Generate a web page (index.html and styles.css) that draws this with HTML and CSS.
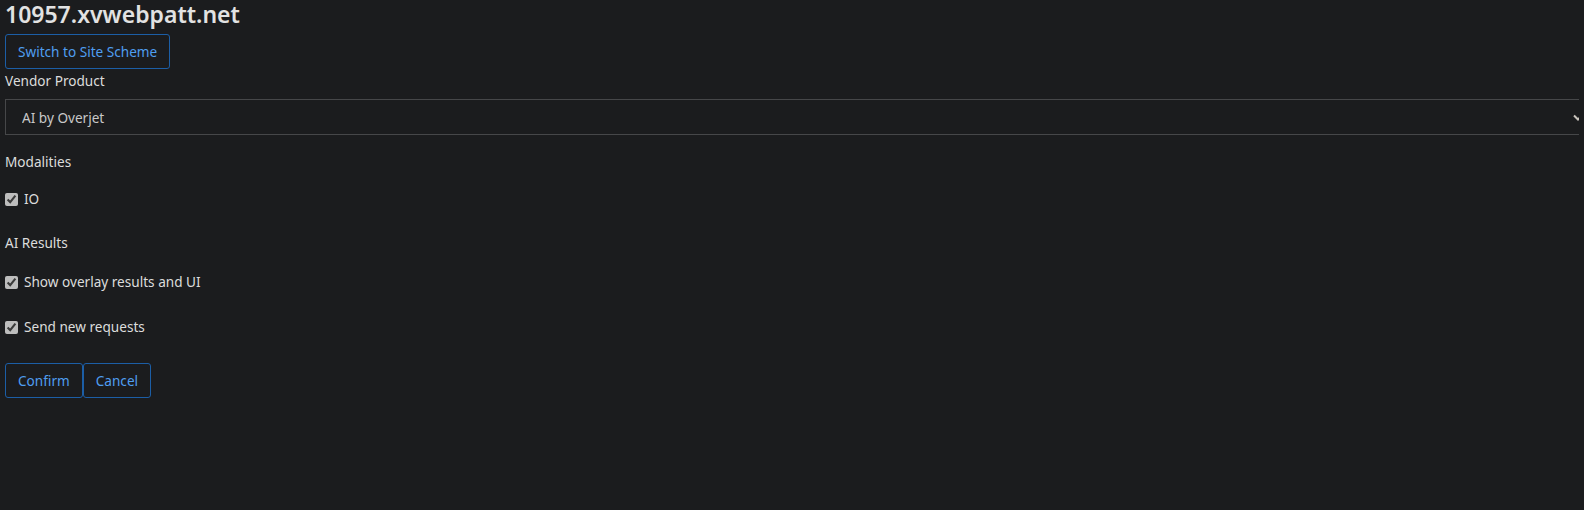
FILE: index.html
```html
<!DOCTYPE html>
<html>
<head>
<meta charset="utf-8">
<title>10957.xvwebpatt.net</title>
<link rel="stylesheet" href="styles.css">
</head>
<body>
<h1 class="site">10957.xvwebpatt.net</h1>
<button class="btn switch" type="button">Switch to Site Scheme</button>
<form class="settings">
<label class="field-label" for="vendor">Vendor Product</label>
<select id="vendor" class="vendor">
<option>AI by Overjet</option>
</select>
<fieldset class="group modalities">
<legend>Modalities</legend>
<label class="check"><input type="checkbox" checked> IO</label>
</fieldset>
<fieldset class="group results">
<legend>AI Results</legend>
<label class="check"><input type="checkbox" checked> Show overlay results and UI</label>
<label class="check"><input type="checkbox" checked> Send new requests</label>
</fieldset>
<div class="actions">
<button class="btn" type="button">Confirm</button><button class="btn" type="button">Cancel</button>
</div>
</form>
</body>
</html>
```

FILE: styles.css
```css
html{background-color:#1b1c1e;overflow:hidden;}
body{margin:0 5px;color:#dcdcdc;font-family:"Noto Sans","Open Sans",sans-serif;font-size:13.6px;}
.site{margin:0;padding-top:1px;font-size:23px;line-height:26px;font-weight:600;color:#e2e2e2;}
.btn{display:inline-block;box-sizing:border-box;height:35px;padding:0 12px;background:transparent;border:1px solid #1c5ea6;border-radius:3px;color:#4f9ef0;font:inherit;cursor:pointer;}
.btn:hover{background-color:#1c2a3a;}
.switch{margin-top:7px;}
.settings{margin:0;}
.field-label{display:block;margin-top:1px;line-height:22px;}
.vendor{display:block;box-sizing:border-box;width:calc(100% + 10px);height:36px;margin-top:7px;padding:0 16px;
  -webkit-appearance:none;appearance:none;
  background:#1b1c1e url("data:image/svg+xml,%3Csvg xmlns='http://www.w3.org/2000/svg' width='10' height='7' viewBox='0 0 10 7'%3E%3Cpath d='M1 1.5l4 4 4-4' fill='none' stroke='%23c9c4bd' stroke-width='2'/%3E%3C/svg%3E") no-repeat right 5px center;
  border:1px solid #464749;border-radius:0;color:#c8c8c8;font:inherit;}
.group{margin:0;padding:0;border:0;}
.group legend{padding:0;line-height:20px;}
.modalities{margin-top:17px;}
.results{margin-top:24px;}
.check{display:flex;align-items:center;gap:6px;line-height:20px;margin-top:17px;}
.results .check{margin-top:19px;}
.results .check + .check{margin-top:25px;}
.check input{margin:0;width:13px;height:13px;accent-color:#bdbdbd;}
.actions{margin-top:26px;}
```
